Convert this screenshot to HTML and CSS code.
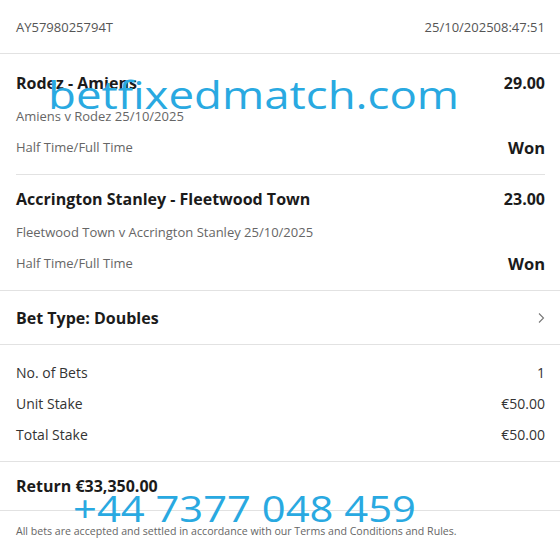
FILE: index.html
```html
<!DOCTYPE html>
<html lang="en">
<head>
  <meta charset="UTF-8" />
  <meta name="viewport" content="width=device-width, initial-scale=1" />
  <title>Bet Receipt</title>
  <link rel="stylesheet" href="styles.css">
</head>
<body>
<div class="receipt">
  <header class="receipt-head">
    <span>AY5798025794T</span>
    <span>25/10/202508:47:51</span>
  </header>

  <section class="legs">
    <div class="leg">
      <div class="leg-row leg-title"><span>Rodez - Amiens</span><span>29.00</span></div>
      <div class="leg-row leg-event"><span>Amiens v Rodez 25/10/2025</span></div>
      <div class="leg-row leg-market"><span>Half Time/Full Time</span><span class="leg-result">Won</span></div>
    </div>
    <div class="leg">
      <div class="leg-row leg-title"><span>Accrington Stanley - Fleetwood Town</span><span>23.00</span></div>
      <div class="leg-row leg-event"><span>Fleetwood Town v Accrington Stanley 25/10/2025</span></div>
      <div class="leg-row leg-market"><span>Half Time/Full Time</span><span class="leg-result">Won</span></div>
    </div>
  </section>

  <section class="bet-type">
    <span>Bet Type: Doubles</span>
    <svg width="10" height="12" viewBox="0 0 10 12" aria-hidden="true">
      <polyline points="3,1.5 7.5,6 3,10.5" fill="none" stroke="#777" stroke-width="1.1"/>
    </svg>
  </section>

  <section class="stakes">
    <div class="stake-row"><span>No. of Bets</span><span>1</span></div>
    <div class="stake-row"><span>Unit Stake</span><span>€50.00</span></div>
    <div class="stake-row"><span>Total Stake</span><span>€50.00</span></div>
  </section>

  <section class="return">Return €33,350.00</section>

  <footer class="terms">All bets are accepted and settled in accordance with our Terms and Conditions and Rules.</footer>

  <div class="mark mark-site">betfixedmatch.com</div>
  <div class="mark mark-phone">+44 7377 048 459</div>
</div>
</body>
</html>
```

FILE: styles.css
```css
body {
  margin: 0;
  font-family: 'Open Sans', 'Noto Sans', sans-serif;
  background: #fff;
  color: #1b1b1b;
}
.receipt {
  position: relative;
  width: 560px;
  height: 552px;
  overflow: hidden;
}
.receipt-head {
  height: 53px;
  padding: 0 15px 0 16px;
  display: flex;
  justify-content: space-between;
  align-items: center;
  font-size: 13px;
  color: #555;
  border-bottom: 1px solid #e2e2e2;
}
.legs {
  border-bottom: 1px solid #e2e2e2;
}
.leg {
  margin: 0 15px 0 16px;
  padding: 10px 0 15px 0;
}
.leg:first-child {
  padding-top: 15px;
}
.leg + .leg {
  border-top: 1px solid #e2e2e2;
}
.leg-row {
  display: flex;
  justify-content: space-between;
  align-items: center;
}
.leg-title {
  height: 28px;
  font-size: 16px;
  font-weight: 700;
}
.leg-event {
  height: 38px;
  font-size: 13px;
  color: #666;
}
.leg-market {
  height: 24px;
  font-size: 13px;
  color: #666;
}
.leg-result {
  font-size: 16.5px;
  font-weight: 700;
  color: #1b1b1b;
}
.bet-type {
  height: 53px;
  padding: 0 14px 0 16px;
  display: flex;
  justify-content: space-between;
  align-items: center;
  font-size: 16px;
  font-weight: 700;
  border-bottom: 1px solid #e2e2e2;
}
.stakes {
  padding: 12px 15px 11px 16px;
  border-bottom: 1px solid #e2e2e2;
}
.stake-row {
  height: 31px;
  display: flex;
  justify-content: space-between;
  align-items: center;
  font-size: 14px;
  color: #333;
}
.return {
  height: 48px;
  padding: 0 16px;
  display: flex;
  align-items: center;
  font-size: 16px;
  font-weight: 700;
  border-bottom: 1px solid #e2e2e2;
}
.terms {
  padding: 13px 16px 0 16px;
  font-size: 10.6px;
  color: #666;
}
.mark {
  position: absolute;
  color: #29a9e1;
  white-space: nowrap;
  transform-origin: left top;
  pointer-events: none;
}
.mark-site {
  left: 48px;
  top: 70px;
  font-size: 38px;
  line-height: 48px;
  transform: scaleX(1.2);
}
.mark-phone {
  left: 73px;
  top: 485px;
  font-size: 36px;
  line-height: 48px;
  transform: scaleX(1.16);
}
```
